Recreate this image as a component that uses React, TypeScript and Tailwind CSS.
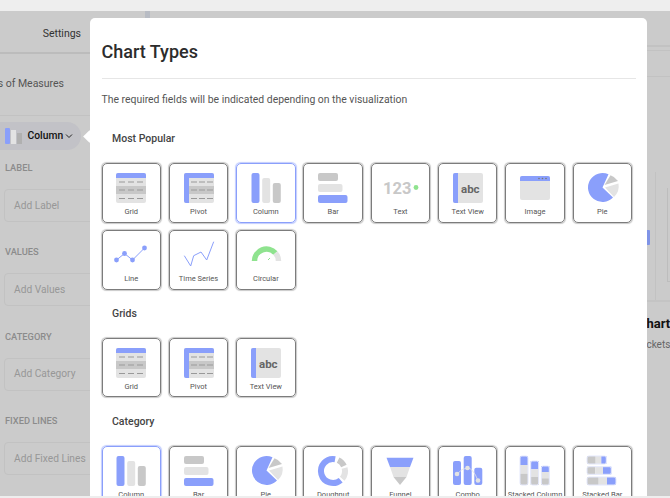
import React from 'react';

const BLUE = '#8a9ffb';
const LIGHT = '#e3e3e3';
const MID = '#c8c8c8';

function Dashes({ x }: { x: number[] }) {
  return (
    <>
      {[8.5, 16.5, 25].map((y) =>
        x.map((left) => <rect key={`${left}-${y}`} x={left} y={y} width="6" height="1" fill="#999" />)
      )}
    </>
  );
}

const icons: Record<string, React.ReactNode> = {
  Grid: (
    <>
      <rect x="0" y="0" width="30" height="30" rx="2" fill={LIGHT} />
      <path d="M0 5V2a2 2 0 0 1 2-2h26a2 2 0 0 1 2 2v3z" fill={BLUE} />
      <rect x="0" y="13" width="30" height="8" fill={MID} />
      <Dashes x={[3, 12, 21]} />
    </>
  ),
  Pivot: (
    <>
      <rect x="0" y="0" width="30" height="30" rx="2" fill={LIGHT} />
      <rect x="5" y="13" width="25" height="8" fill={MID} />
      <path d="M0 28V2a2 2 0 0 1 2-2h26a2 2 0 0 1 2 2v3H5v25H2a2 2 0 0 1-2-2z" fill={BLUE} />
      <Dashes x={[7, 15, 23]} />
    </>
  ),
  Column: (
    <>
      <rect x="0.5" y="0" width="8" height="30" rx="2" fill={BLUE} />
      <rect x="11.2" y="5" width="8" height="25" rx="2" fill={LIGHT} />
      <rect x="21.8" y="10" width="8" height="20" rx="2" fill={MID} />
    </>
  ),
  Bar: (
    <>
      <rect x="0" y="0" width="20" height="8" rx="2" fill={MID} />
      <rect x="0" y="11" width="24.5" height="8" rx="2" fill={LIGHT} />
      <rect x="0" y="22" width="29.5" height="8" rx="2" fill={BLUE} />
    </>
  ),
  Text: (
    <>
      <text x="-2" y="20.5" fontSize="16.5" fontWeight="700" fill={MID} fontFamily="Roboto, sans-serif">
        123
      </text>
      <circle cx="31" cy="14.5" r="2.4" fill="#8fe38f" />
    </>
  ),
  'Text View': (
    <>
      <rect x="0" y="0" width="30" height="30" rx="2" fill={LIGHT} />
      <path d="M2 0h3v30H2a2 2 0 0 1-2-2V2a2 2 0 0 1 2-2z" fill={BLUE} />
      <text x="8" y="19.5" fontSize="11.5" fontWeight="700" fill="#666" fontFamily="Roboto, sans-serif">
        abc
      </text>
    </>
  ),
  Image: (
    <>
      <rect x="0" y="3" width="30" height="24" rx="2" fill={LIGHT} />
      <path d="M0 8V5a2 2 0 0 1 2-2h26a2 2 0 0 1 2 2v3z" fill={BLUE} />
      <circle cx="19" cy="5.5" r="0.8" fill="#777" />
      <circle cx="22.5" cy="5.5" r="0.8" fill="#777" />
      <circle cx="26" cy="5.5" r="0.8" fill="#777" />
    </>
  ),
  Pie: (
    <>
      <path d="M15.5 14.5L21.5 1.3A14.5 14.5 0 1 0 26 24.5Z" fill={BLUE} />
      <path d="M17.5 12L23.5 2.2A14 14 0 0 1 31 8Z" fill={MID} />
      <path d="M18 14.5L31.5 10.5A15 15 0 0 1 27 24Z" fill={LIGHT} />
    </>
  ),
  Line: (
    <>
      <polyline points="0.5,20 8.5,13.5 16.5,20 28.5,8" fill="none" stroke={BLUE} strokeWidth="1" />
      <circle cx="0.5" cy="20" r="2.4" fill={BLUE} />
      <circle cx="8.5" cy="13.5" r="2.4" fill={BLUE} />
      <circle cx="16.5" cy="20" r="2.4" fill={BLUE} />
      <circle cx="28.5" cy="8" r="2.4" fill={BLUE} />
    </>
  ),
  'Time Series': (
    <polyline points="0.3,15.7 6.7,26 9.7,15.7 17,12 22.7,20 29.7,1.7" fill="none" stroke={BLUE} strokeWidth="1" />
  ),
  Circular: (
    <>
      <path d="M3.5 21A12 12 0 0 1 24.4 13" fill="none" stroke="#8fe38f" strokeWidth="5.5" />
      <path d="M24.4 13A12 12 0 0 1 27.5 21" fill="none" stroke={LIGHT} strokeWidth="5.5" />
      <path d="M17 20L19 18" stroke="#8fe38f" strokeWidth="1" />
    </>
  ),
  Doughnut: (
    <>
      <path d="M17.1 3.2A12 12 0 1 0 22.7 24.2" fill="none" stroke={BLUE} strokeWidth="6" />
      <path d="M20.1 4.1A12 12 0 0 1 25.9 9.9" fill="none" stroke={MID} strokeWidth="6" />
      <path d="M26.6 11.9A12 12 0 0 1 24.2 22.7" fill="none" stroke={LIGHT} strokeWidth="6" />
    </>
  ),
  Funnel: (
    <>
      <polygon points="1.5,1.7 28.5,1.7 25,11 5,11" fill={BLUE} />
      <polygon points="5,11 25,11 21.5,21 8.5,21" fill={LIGHT} />
      <polygon points="8.5,21 21.5,21 15,29" fill={MID} />
    </>
  ),
  Combo: (
    <>
      <rect x="0" y="5" width="8" height="24" rx="2" fill={BLUE} />
      <rect x="10.7" y="0" width="8" height="29" rx="2" fill={BLUE} />
      <rect x="21.3" y="11.7" width="8" height="17.3" rx="2" fill={BLUE} />
      <path d="M4 18Q9 12 14.5 12T25 24.5" fill="none" stroke={LIGHT} strokeWidth="0.8" />
      <circle cx="4" cy="18" r="2.3" fill={LIGHT} />
      <circle cx="14.5" cy="12" r="2.3" fill={LIGHT} />
      <circle cx="25" cy="24.5" r="2.3" fill={LIGHT} />
    </>
  ),
  'Stacked Column': (
    <>
      <rect x="0" y="0" width="8" height="9" fill={BLUE} />
      <rect x="0" y="9" width="8" height="8.7" fill={LIGHT} />
      <rect x="0" y="17.7" width="8" height="11.3" fill={MID} />
      <rect x="10.7" y="5" width="8" height="8.3" fill={BLUE} />
      <rect x="10.7" y="13.3" width="8" height="7.7" fill={LIGHT} />
      <rect x="10.7" y="21" width="8" height="8" fill={MID} />
      <rect x="21.3" y="10" width="8" height="6" fill={BLUE} />
      <rect x="21.3" y="16" width="8" height="6.3" fill={LIGHT} />
      <rect x="21.3" y="22.3" width="8" height="6.7" fill={MID} />
      <rect x="0" y="0" width="8" height="29" rx="2" fill="none" stroke="#e4e8fc" />
      <rect x="10.7" y="5" width="8" height="24" rx="2" fill="none" stroke="#e4e8fc" />
      <rect x="21.3" y="10" width="8" height="19" rx="2" fill="none" stroke="#e4e8fc" />
    </>
  ),
  'Stacked Bar': (
    <>
      <rect x="0" y="0" width="8.7" height="8" fill={MID} />
      <rect x="8.7" y="0" width="5.6" height="8" fill={LIGHT} />
      <rect x="14.3" y="0" width="5" height="8" fill={BLUE} />
      <rect x="0" y="10.7" width="8.3" height="7.6" fill={MID} />
      <rect x="8.3" y="10.7" width="7.7" height="7.6" fill={LIGHT} />
      <rect x="16" y="10.7" width="8.3" height="7.6" fill={BLUE} />
      <rect x="0" y="21" width="11.7" height="8" fill={MID} />
      <rect x="11.7" y="21" width="8.3" height="8" fill={LIGHT} />
      <rect x="20" y="21" width="9" height="8" fill={BLUE} />
      <rect x="0" y="0" width="19.3" height="8" rx="2" fill="none" stroke="#e4e8fc" />
      <rect x="0" y="10.7" width="24.3" height="7.6" rx="2" fill="none" stroke="#e4e8fc" />
      <rect x="0" y="21" width="29" height="8" rx="2" fill="none" stroke="#e4e8fc" />
    </>
  ),
};

function Tile({ name, active }: { name: string; active?: boolean }) {
  return (
    <div
      className={
        'flex h-[59.5px] w-[59.5px] flex-col items-center rounded-[5px] border pt-[9px] ' +
        (active
          ? 'border-[#8a9ffb] shadow-[0_0_1px_0.5px_#c2cdfd]'
          : 'border-[#7c7c7c] shadow-[0_0_1px_0.5px_#c9c9c9]')
      }
    >
      <svg width="30" height="30" viewBox="0 0 30 30" className="shrink-0 overflow-visible">
        {icons[name]}
      </svg>
      <span className="mt-[3px] whitespace-nowrap text-[7.5px] leading-[11px] text-[#555]">{name}</span>
    </div>
  );
}

function Section({ title, items, active }: { title: string; items: string[]; active?: string }) {
  return (
    <>
      <h3 className="ml-[10.5px] text-[10.5px] leading-[16px] font-medium text-[#444]">{title}</h3>
      <div className="mt-[16px] mb-[16.3px] grid grid-cols-[repeat(8,59.5px)] gap-x-[7.8px] gap-y-[7.5px]">
        {items.map((n) => (
          <Tile key={n} name={n} active={n === active} />
        ))}
      </div>
    </>
  );
}

function Field({ label, placeholder }: { label: string; placeholder: string }) {
  return (
    <div className="mb-[24.3px]">
      <div className="pl-[5px] text-[9.3px] leading-[12px] font-medium text-[#8b8b8b]">{label}</div>
      <div className="mt-[15px] ml-[4px] flex h-[33px] w-[120px] items-center rounded-[4px] border border-[#c2c2c2] pl-[9px] text-[10.2px] whitespace-nowrap text-[#979797]">
        {placeholder}
      </div>
    </div>
  );
}

export default function App() {
  return (
    <div className="relative flex h-[498px] w-[670px] flex-col overflow-hidden bg-[#cbcbcb] font-['Roboto',sans-serif]">
      <div className="h-[11px] shrink-0 bg-[#eeeeee]" />

      <div className="flex min-h-0 flex-1">
        {/* left settings panel, dimmed */}
        <div className="w-[90px] shrink-0 overflow-hidden">
          <div className="flex h-[43px] items-end justify-end border-b-[2px] border-[#bcbcbc] pr-[9px] pb-[11px] text-[10.5px] leading-[14px] text-[#333]">
            Settings
          </div>
          <div className="mt-[23px] flex w-[64px] justify-end whitespace-nowrap text-[10.5px] leading-[14px] text-[#555]">
            Sets of Measures
          </div>
          <div className="mt-[24px] border-t border-[#c2c2c2]" />
          <div className="mt-[6px] flex h-[28px] w-[81px] items-center rounded-r-[14px] bg-[#c2c2c7] pl-[5px]">
            <div className="flex h-[16px] items-end gap-[1px]">
              <span className="h-[16px] w-[4.5px] rounded-[1px] bg-[#8a9ffb]" />
              <span className="h-[14px] w-[5px] bg-[#e3e3e3]" />
              <span className="h-[11px] w-[5px] bg-[#b0b0b0]" />
            </div>
            <span className="ml-[6px] text-[10.3px] font-medium text-[#111]">Column</span>
            <svg width="8" height="8" viewBox="0 0 8 8" className="ml-[2px]">
              <path d="M1 2.5L4 5.5L7 2.5" fill="none" stroke="#222" strokeWidth="1" />
            </svg>
          </div>
          <div className="mt-[12px]">
            <Field label="LABEL" placeholder="Add Label" />
            <Field label="VALUES" placeholder="Add Values" />
            <Field label="CATEGORY" placeholder="Add Category" />
            <Field label="FIXED LINES" placeholder="Add Fixed Lines" />
          </div>
        </div>

        <div className="flex-1" />

        {/* right side peeking past the modal */}
        <div className="w-[23px] shrink-0 overflow-hidden">
          <div className="mt-[34px] h-[2px] bg-[#c2c2c2]" />
          <div className="mt-[3px] h-[1px] bg-[#c2c2c2]" />
          <div className="mt-[25px] h-[1px] bg-[#c2c2c2]" />
          <div className="relative mt-[95px] h-[130px] border-b-[2px] border-[#c4c4c4]">
            <div className="ml-[8px] h-full border-l border-[#c2c2c2] pt-[16px] pl-[11px]">
              <div className="h-[94px] border-b border-l border-[#bdbdbd]" />
            </div>
            <div className="absolute top-[58px] left-0 h-[15px] w-[3px] rounded-r-[1px] bg-[#7f93e6]" />
          </div>
          <div className="mt-[14px] -ml-[9px] whitespace-nowrap text-[13px] leading-[16px] font-bold text-[#111]">
            Chart
          </div>
          <div className="mt-[7px] -ml-[9px] whitespace-nowrap text-[10px] leading-[12px] text-[#666]">
            Tickets
          </div>
        </div>
      </div>

      <div className="h-[2px] shrink-0 bg-[#eeeeee]" />

      {/* modal */}
      <div className="absolute top-[18px] left-[90px] h-[478px] w-[557px] overflow-hidden rounded-t-[5px] bg-white pr-[11px] pl-[11.5px]">
        <h2 className="mt-[21px] text-[18px] leading-[26px] font-medium text-[#2c2c2c]">Chart Types</h2>
        <div className="mt-[13px] border-t border-[#e6e6e6]" />
        <p className="mt-[14px] text-[10.42px] leading-[14px] text-[#555]">
          The required fields will be indicated depending on the visualization
        </p>
        <div className="mt-[24px]">
          <Section
            title="Most Popular"
            active="Column"
            items={['Grid', 'Pivot', 'Column', 'Bar', 'Text', 'Text View', 'Image', 'Pie', 'Line', 'Time Series', 'Circular']}
          />
          <Section title="Grids" items={['Grid', 'Pivot', 'Text View']} />
          <Section
            title="Category"
            active="Column"
            items={['Column', 'Bar', 'Pie', 'Doughnut', 'Funnel', 'Combo', 'Stacked Column', 'Stacked Bar']}
          />
        </div>
      </div>

      {/* pointer of the popup */}
      <div className="absolute top-[131.5px] left-[85px] h-[9px] w-[9px] rotate-45 bg-white" />
      {/* handle at the top */}
      <div className="absolute top-[11px] left-[145px] h-[7px] w-[5px] bg-[#b8bcc4]" />
    </div>
  );
}
